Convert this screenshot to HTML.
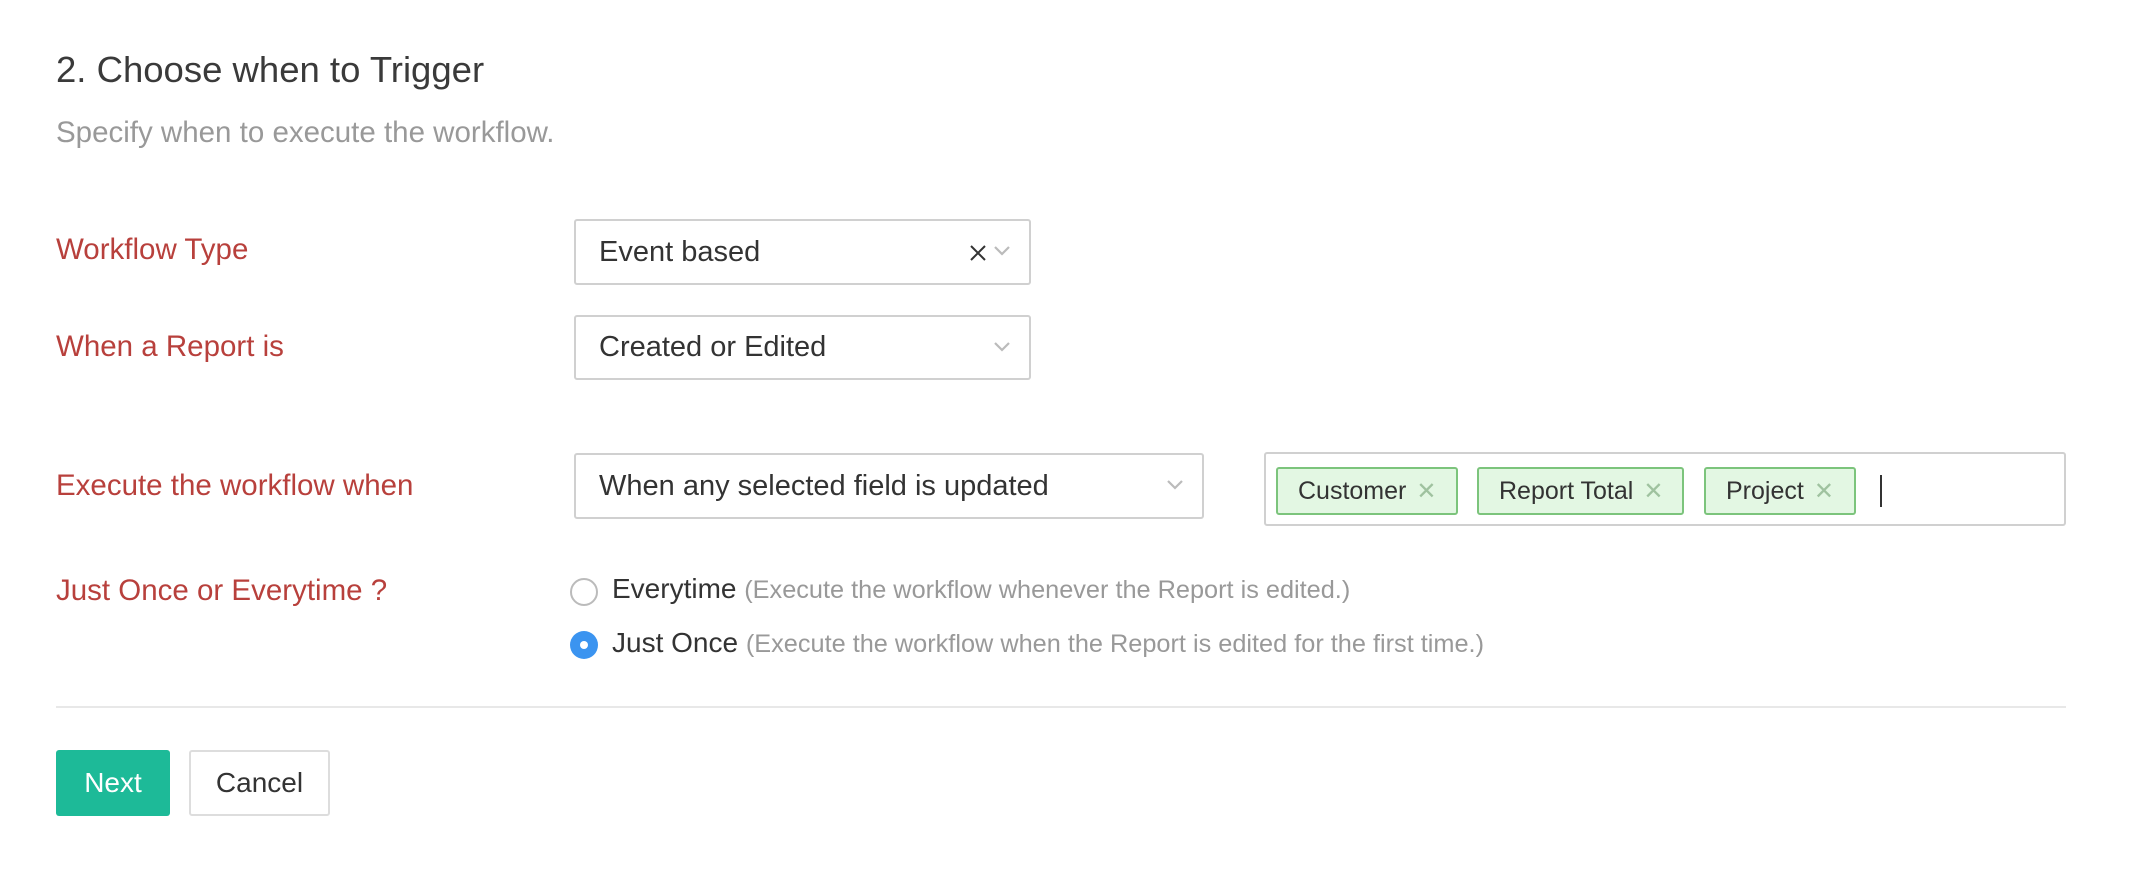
<!DOCTYPE html>
<html><head><meta charset="utf-8"><style>
*{box-sizing:border-box;margin:0;padding:0}
body{width:2144px;height:888px;background:#fff;font-family:"Liberation Sans",Arial,sans-serif;position:relative;overflow:hidden;color:#333}
.a{position:absolute;white-space:nowrap}
.lbl{color:#b8403c;font-size:29.5px}
.box{position:absolute;border:2px solid #d0d0d0;border-radius:3px;background:#fff;font-size:29px;color:#333;padding-left:23px;display:flex;align-items:center}
.chev{position:absolute;right:18px;top:50%;margin-top:-7px}
.tag{position:absolute;top:467px;height:48px;background:#e3f7e3;border:2px solid #7cc47c;border-radius:3px;font-size:25px;color:#333;display:flex;align-items:center;padding-left:20px}
.tag .x{color:#9fc29f;margin-left:10px;font-size:24px}
.radio{position:absolute;width:28px;height:28px;border-radius:50%}
.rt{font-size:28px;color:#333}
.rt span{font-size:25.3px;color:#999}
</style></head><body>
<div class="a" style="left:56px;top:49px;font-size:36.5px;color:#3a3a3a">2. Choose when to Trigger</div>
<div class="a" style="left:56px;top:116px;font-size:29.5px;color:#999">Specify when to execute the workflow.</div>

<div class="a lbl" style="left:56px;top:233px">Workflow Type</div>
<div class="box" style="left:574px;top:219px;width:457px;height:66px">Event based
<svg style="position:absolute;right:42px;top:23px" width="18" height="18" viewBox="0 0 18 18"><path d="M2 2L16 16M16 2L2 16" stroke="#333" stroke-width="2"/></svg>
<svg class="chev" width="18" height="12" viewBox="0 0 18 12"><path d="M2 2L9 9L16 2" stroke="#bbb" stroke-width="2.2" fill="none"/></svg></div>

<div class="a lbl" style="left:56px;top:330px">When a Report is</div>
<div class="box" style="left:574px;top:315px;width:457px;height:65px">Created or Edited
<svg class="chev" width="18" height="12" viewBox="0 0 18 12"><path d="M2 2L9 9L16 2" stroke="#bbb" stroke-width="2.2" fill="none"/></svg></div>

<div class="a lbl" style="left:56px;top:469px">Execute the workflow when</div>
<div class="box" style="left:574px;top:453px;width:630px;height:66px">When any selected field is updated
<svg class="chev" width="18" height="12" viewBox="0 0 18 12"><path d="M2 2L9 9L16 2" stroke="#bbb" stroke-width="2.2" fill="none"/></svg></div>

<div class="box" style="left:1264px;top:452px;width:802px;height:74px"></div>
<div class="tag" style="left:1276px;width:182px">Customer<span class="x">✕</span></div>
<div class="tag" style="left:1477px;width:207px">Report Total<span class="x">✕</span></div>
<div class="tag" style="left:1704px;width:152px">Project<span class="x">✕</span></div>
<div class="a" style="left:1880px;top:475px;width:2px;height:32px;background:#333"></div>

<div class="a lbl" style="left:56px;top:574px">Just Once or Everytime ?</div>
<div class="radio" style="left:570px;top:578px;border:2px solid #bbb"></div>
<div class="a rt" style="left:612px;top:573px">Everytime <span>(Execute the workflow whenever the Report is edited.)</span></div>
<div class="radio" style="left:570px;top:631px;background:#3b94f0"><div style="position:absolute;left:10px;top:10px;width:8px;height:8px;border-radius:50%;background:#fff"></div></div>
<div class="a rt" style="left:612px;top:627px">Just Once <span>(Execute the workflow when the Report is edited for the first time.)</span></div>

<div class="a" style="left:56px;top:706px;width:2010px;height:2px;background:#e8e8e8"></div>

<div class="a" style="left:56px;top:750px;width:114px;height:66px;background:#1dba98;border-radius:3px;color:#fff;font-size:28px;display:flex;align-items:center;justify-content:center">Next</div>
<div class="a" style="left:189px;top:750px;width:141px;height:66px;border:2px solid #ddd;border-radius:3px;color:#333;font-size:28px;display:flex;align-items:center;justify-content:center">Cancel</div>
</body></html>
